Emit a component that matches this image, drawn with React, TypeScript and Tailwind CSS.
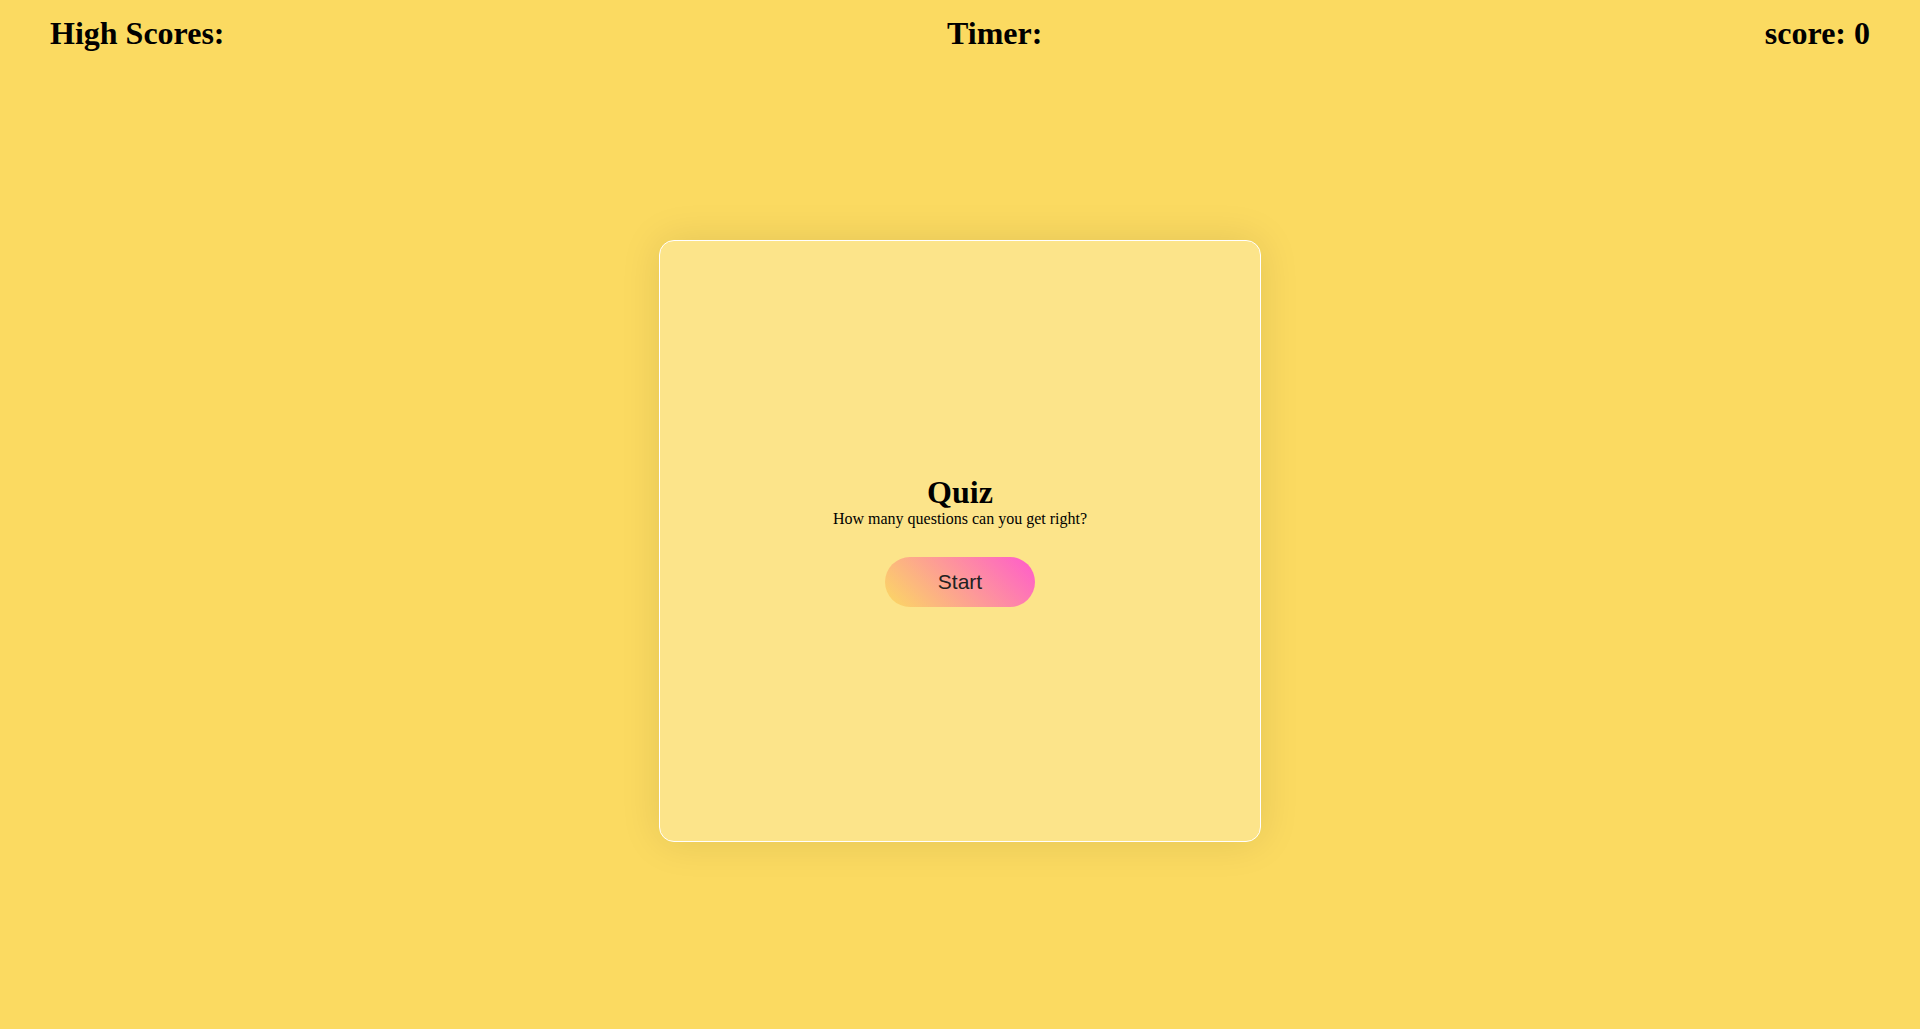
export default function App() {
  return (
    <div className="min-h-[1029px] bg-[#FBDA61] font-['Liberation_Serif',serif] text-black">
      <header className="flex justify-between px-[50px] pt-[15px] text-[32px] font-bold leading-[37px]">
        <h2>High Scores:</h2>
        <h2>Timer:</h2>
        <h2>score: 0</h2>
      </header>

      <main className="mt-[188px] flex justify-center">
        <div className="flex h-[602px] w-[602px] flex-col items-center justify-center rounded-[15px] border border-white bg-[#FCE48A] pb-[2px] shadow-[0_0_40px_rgba(0,0,0,0.1)]">
          <h1 className="text-[32px] font-bold leading-[36px]">Quiz</h1>
          <p className="text-[16px] leading-[17px]">How many questions can you get right?</p>
          <button className="mt-[30px] h-[50px] w-[150px] rounded-full bg-[linear-gradient(45deg,#FBDA61_0%,#FF5ACD_100%)] font-['Liberation_Sans',sans-serif] text-[21px] text-[#222]">
            Start
          </button>
        </div>
      </main>
    </div>
  );
}
